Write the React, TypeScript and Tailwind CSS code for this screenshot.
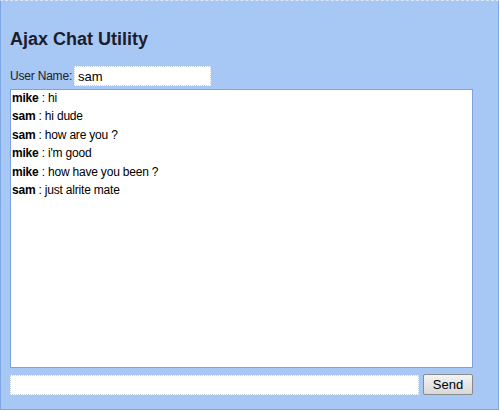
import React from "react";

const messages: [string, string][] = [
  ["mike", "hi"],
  ["sam", "hi dude"],
  ["sam", "how are you ?"],
  ["mike", "i'm good"],
  ["mike", "how have you been ?"],
  ["sam", "just alrite mate"],
];

export default function App() {
  return (
    <div className="w-[500px] h-[411px] bg-white" style={{ fontFamily: '"Liberation Sans", Arial, sans-serif' }}>
      <div className="w-[499px] h-[410px] bg-[#a7c7f5] border-x border-b border-[#7ea7e6] border-t border-t-[#dfe6ee] border-dashed [border-left-style:solid] [border-right-style:solid] [border-bottom-style:solid] pl-[9px] pt-[27px] flex flex-col">
        <h1 className="text-[18px] leading-[22px] font-bold text-[#1c1c2a] m-0">Ajax Chat Utility</h1>
        <div className="flex items-center mt-[16px] h-[20px]">
          <span className="text-[12px] tracking-[-0.2px] text-[#222] mr-[2px]">User Name:</span>
          <input
            defaultValue="sam"
            className="w-[137px] h-[20px] bg-white text-[13px] text-black px-[3px] outline-none border border-dotted border-[#c9d6e6]"
          />
        </div>
        <div className="mt-[3px] w-[463px] h-[279px] bg-white border border-[#7ba3e3] pl-[1px] overflow-hidden">
          <div className="-mt-[1px]">
            {messages.map(([u, m], i) => (
              <div key={i} className="text-[12px] leading-[18.4px] tracking-[-0.2px] text-black">
                <b className="font-bold">{u}</b> : {m}
              </div>
            ))}
          </div>
        </div>
        <div className="flex items-center mt-[6px] w-[463px]">
          <input className="w-[409px] h-[20px] bg-white border border-dotted border-[#c6d3e3] outline-none" />
          <button className="ml-[4px] w-[50px] h-[21px] text-[13px] text-black bg-gradient-to-b from-[#f4f4f4] to-[#d8d8d8] border border-[#8a8a8a] rounded-[2px] leading-none">
            Send
          </button>
        </div>
      </div>
    </div>
  );
}
